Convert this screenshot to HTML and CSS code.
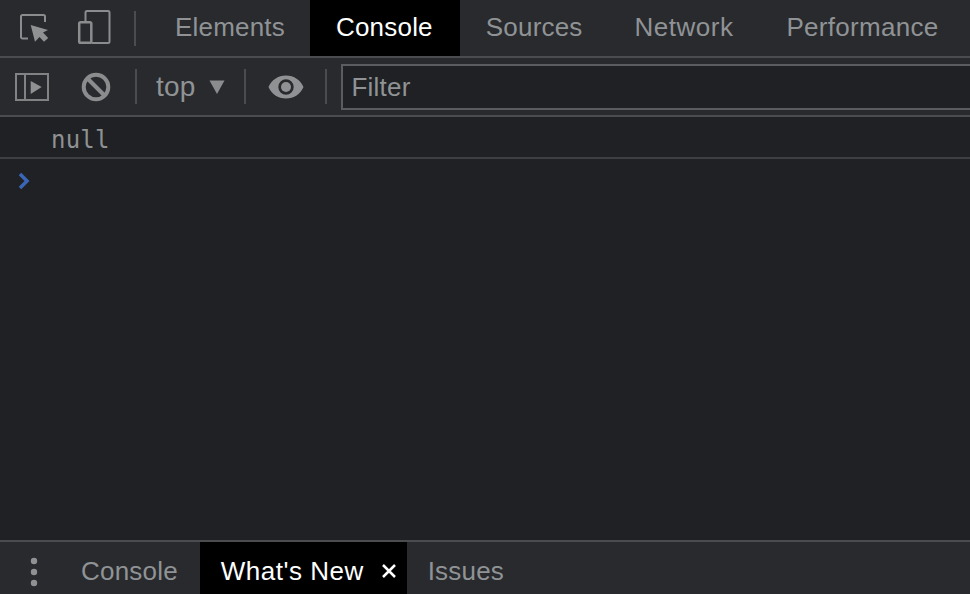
FILE: index.html
```html
<!DOCTYPE html>
<html lang="en">
<head>
<meta charset="utf-8">
<title>DevTools</title>
<link rel="stylesheet" href="styles.css">
</head>
<body>
<div class="app">
  <header class="bar main-tabs">
    <button class="icon icon-inspect" aria-label="Inspect">
      <svg width="32" height="32" viewBox="0 0 32 32"><path d="M10 26.500H4.500A1.500 1.500 0 0 1 3 25V4.500A1.500 1.500 0 0 1 4.500 3h21A1.500 1.500 0 0 1 27 4.500V10" fill="none" stroke="#8a8c8e" stroke-width="2"/><path d="M12.700 13L30 18l-5 2.500 5.200 5.500-4.200 3.700-4.500-4.700-4.500 4.700z" fill="#8f9193"/></svg>
    </button>
    <button class="icon icon-device" aria-label="Device">
      <svg width="36" height="36" viewBox="0 0 36 36"><path d="M8.500 11V2.500A1.500 1.500 0 0 1 10 1h21a1.500 1.500 0 0 1 1.500 1.500v29a1.500 1.500 0 0 1-1.500 1.500H15" fill="none" stroke="#8a8c8e" stroke-width="2"/><path d="M3.500 12.200h9.500a1.300 1.300 0 0 1 1.300 1.300v18a1.300 1.300 0 0 1-1.300 1.300H3.500a1.300 1.300 0 0 1-1.300-1.300v-18a1.300 1.300 0 0 1 1.300-1.300z" fill="none" stroke="#8a8c8e" stroke-width="2.500"/></svg>
    </button>
    <span class="sep sep-main"></span>
    <span class="tab tab-elements">Elements</span>
    <span class="tab tab-active tab-console">Console</span>
    <span class="tab tab-sources">Sources</span>
    <span class="tab tab-network">Network</span>
    <span class="tab tab-perf">Performance</span>
  </header>
  <div class="bar toolbar">
    <svg class="tool-sidebar" width="34" height="30" viewBox="0 0 34 30"><rect x="1" y="2" width="32" height="26" fill="none" stroke="#808284" stroke-width="2"/><path d="M10 2v26" stroke="#808284" stroke-width="2"/><path d="M15.700 9l11 6-11 7z" fill="#8f9193"/></svg>
    <svg class="tool-clear" width="30" height="30" viewBox="0 0 30 30"><circle cx="15" cy="15" r="12.300" fill="none" stroke="#8a8c8e" stroke-width="4"/><path d="M6.500 6.500l17 17" stroke="#8a8c8e" stroke-width="4"/></svg>
    <span class="sep sep-clear"></span>
    <span class="context">top</span>
    <svg class="context-arrow" width="16" height="14" viewBox="0 0 16 14"><path d="M0.500 0.500h15L8 14z" fill="#8a8c8e"/></svg>
    <span class="sep sep-context"></span>
    <svg class="tool-eye" width="36" height="24" viewBox="0 0 36 24"><path fill-rule="evenodd" d="M18 0.500C10 0.500 3.500 5 0.500 12c3 7 9.500 11.500 17.500 11.500S32.500 19 35.500 12C32.500 5 26 0.500 18 0.500zM18 4.300a7.700 7.700 0 1 1 0 15.400 7.700 7.700 0 0 1 0-15.400z" fill="#8f9193"/><circle cx="18" cy="12" r="5" fill="#8f9193"/></svg>
    <span class="sep sep-eye"></span>
    <div class="filter">Filter</div>
  </div>
  <main class="console">
    <div class="row-null"><span class="mono">null</span></div>
    <div class="row-prompt">
      <svg width="13" height="18" viewBox="0 0 13 18"><path d="M3 2l7 7-7 7" fill="none" stroke="#3b66b8" stroke-width="3.500"/></svg>
    </div>
  </main>
  <footer class="bar drawer">
    <svg class="drawer-menu" width="8" height="32" viewBox="0 0 8 32"><circle cx="4" cy="5" r="3.200" fill="#8f9193"/><circle cx="4" cy="16" r="3.200" fill="#8f9193"/><circle cx="4" cy="27" r="3.200" fill="#8f9193"/></svg>
    <span class="tab tab-drawer-console">Console</span>
    <span class="tab tab-active tab-new">What's New<svg class="close" width="16" height="16" viewBox="0 0 16 16"><path d="M2 2l12 12M14 2L2 14" stroke="#fff" stroke-width="2.500"/></svg></span>
    <span class="tab tab-issues">Issues</span>
  </footer>
</div>
</body>
</html>
```
FILE: styles.css
```css
* { box-sizing: border-box; }
html, body { margin: 0; height: 100%; }
body { background: #202124; overflow: hidden; }
.app {
  width: 970px;
  height: 594px;
  display: flex;
  flex-direction: column;
  font-family: "Liberation Sans", Arial, sans-serif;
  font-size: 26px;
  font-kerning: none;
  letter-spacing: 0.2px;
  color: #8f9396;
  overflow: hidden;
}
.bar { display: flex; align-items: center; background: #292a2d; flex: none; }
.bar svg { flex: none; }
.icon { display: flex; padding: 0; border: 0; background: none; }
.main-tabs { height: 58px; border-bottom: 2px solid #4a4c50; padding-left: 18px; align-items: stretch; }
.main-tabs .icon { align-items: center; }
.icon-device { margin-left: 27px; }
.sep { display: block; width: 2px; height: 35px; background: #4a4c50; flex: none; }
.main-tabs .sep { align-self: center; }
.sep-main { margin-left: 21px; }
.tab { display: flex; align-items: center; white-space: nowrap; }
.main-tabs .tab { padding-bottom: 2px; }
.tab-active { background: #000; color: #fff; }
.tab-elements { margin-left: 39px; }
.main-tabs .tab-console { margin-left: 25px; padding-left: 26px; padding-right: 27px; }
.tab-sources { margin-left: 26px; }
.tab-network { margin-left: 52px; letter-spacing: 0.5px; }
.tab-perf { margin-left: 53px; letter-spacing: 0.3px; }
.toolbar { height: 59px; border-bottom: 2px solid #4a4c50; padding-left: 15px; }
.tool-sidebar, .tool-clear { margin-top: 1px; }
.tool-clear { margin-left: 32px; }
.sep-clear { margin-left: 24px; }
.context { margin-left: 19px; font-size: 28px; }
.context-arrow { margin-left: 13px; }
.sep-context { margin-left: 19px; }
.tool-eye { margin-left: 22px; }
.sep-eye { margin-left: 21px; }
.filter {
  flex: none;
  width: 700px;
  height: 46px;
  margin-left: 14px;
  border: 2px solid #5a5c60;
  background: #202124;
  padding: 2px 0 0 9px;
  display: flex;
  align-items: center;
}
.console { flex: 1; background: #202124; display: flex; flex-direction: column; }
.row-null { height: 42px; border-bottom: 2px solid #3d3f43; padding: 5px 0 0 51px; display: flex; align-items: center; }
.mono { font-family: "DejaVu Sans Mono", monospace; font-size: 24px; color: #8f9193; }
.row-prompt { padding: 13px 0 0 17px; display: flex; }
.drawer { height: 54px; border-top: 2px solid #4a4c50; align-items: stretch; }
.drawer .tab { padding-top: 6px; }
.drawer-menu { align-self: center; margin: 8px 0 0 30px; }
.tab-drawer-console { margin-left: 43px; margin-right: 22px; }
.drawer .tab-new { padding-left: 21px; padding-right: 10px; letter-spacing: 0.5px; }
.close { margin-left: 17px; }
.tab-issues { margin-left: 21px; }
```
